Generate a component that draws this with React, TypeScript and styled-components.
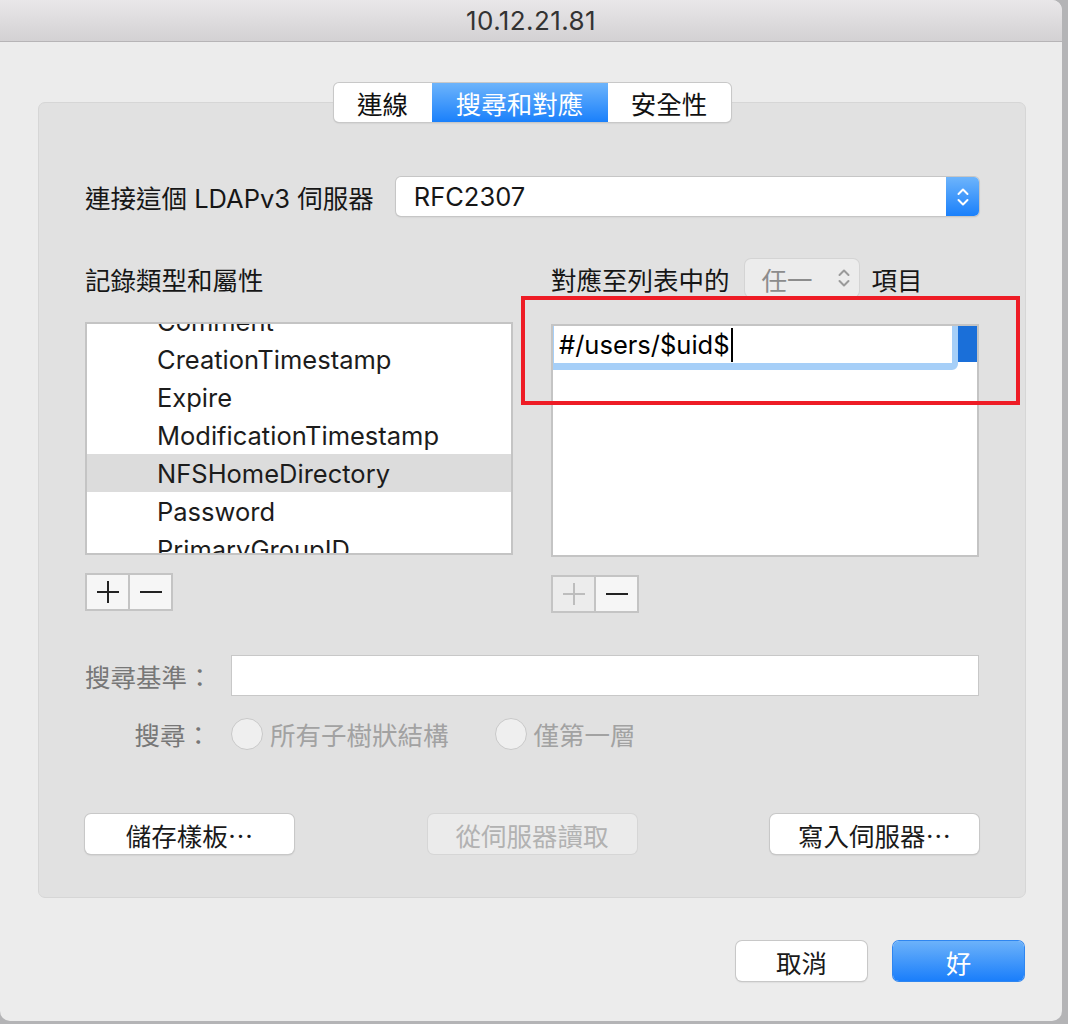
import React from "react";
import styled, { createGlobalStyle, css } from "styled-components";

const FS = "25.5px";

const Global = createGlobalStyle`
  html, body { margin: 0; padding: 0; background: #b4b4b6; }
  body { font-family: "Inter", "Noto Sans CJK TC", sans-serif; }
  * { box-sizing: border-box; }
`;

const Window = styled.div`
  position: relative;
  width: 1062px;
  height: 1021px;
  background: #ececec;
  border-radius: 0 10px 10px 10px;
  overflow: hidden;
  display: flex;
  flex-direction: column;
`;

const TitleBar = styled.div`
  height: 42px;
  flex: none;
  display: flex;
  align-items: center;
  justify-content: center;
  background: linear-gradient(#e9e7e9, #d3d1d3);
  border-bottom: 1px solid #b6b4b6;
  font-size: 26px;
  color: #333;
  letter-spacing: 0.4px;
`;

const Content = styled.div`
  display: flex;
  flex-direction: column;
  padding: 41px 36px 0 38px;
`;

const TabBar = styled.div`
  align-self: center;
  display: flex;
  height: 39px;
  margin-bottom: -20px;
  position: relative;
  z-index: 1;
  background: #fff;
  border-radius: 5px;
  overflow: hidden;
  box-shadow: 0 0 0 1px #c8c8c8, 0 1px 2px rgba(0, 0, 0, 0.18);
`;

const Tab = styled.div<{ $w: number; $active?: boolean }>`
  width: ${(p) => p.$w}px;
  display: flex;
  align-items: center;
  justify-content: center;
  font-size: ${FS};
  color: #111;
  ${(p) =>
    p.$active &&
    css`
      background: linear-gradient(#6db4fb, #1a80fb);
      color: #fff;
    `}
`;

const GroupBox = styled.div`
  height: 796px;
  background: #e1e1e1;
  border: 1px solid #d6d6d6;
  border-radius: 7px;
  padding: 74px 46px 0 46px;
  display: flex;
  flex-direction: column;
`;

const Label = styled.span<{ $muted?: boolean; $faint?: boolean }>`
  font-size: ${FS};
  color: ${(p) => (p.$faint ? "#a2a2a2" : p.$muted ? "#7a7a7a" : "#161616")};
  white-space: nowrap;
`;

const ServerRow = styled.div`
  display: flex;
  align-items: center;
  height: 39px;
  gap: 22px;
`;

const Popup = styled.div`
  flex: 1;
  height: 39px;
  display: flex;
  background: #fff;
  border-radius: 5px;
  box-shadow: 0 0 0 1px #c6c6c6, 0 1px 2px rgba(0, 0, 0, 0.15);
  overflow: hidden;
`;

const PopupText = styled.div`
  flex: 1;
  display: flex;
  align-items: center;
  padding-left: 18px;
  font-size: ${FS};
  color: #161616;
`;

const Stepper = styled.div`
  width: 33px;
  display: flex;
  align-items: center;
  justify-content: center;
  background: linear-gradient(#6db4fb, #1a80fb);
`;

const TwoCol = styled.div<{ $mt: number }>`
  display: grid;
  grid-template-columns: 428px 428px;
  column-gap: 38px;
  margin-top: ${(p) => p.$mt}px;
`;

const HeadCell = styled.div`
  display: flex;
  align-items: center;
  height: 38px;
`;

const SmallPopup = styled.div`
  width: 114px;
  height: 38px;
  margin: 0 13px 0 15px;
  display: flex;
  align-items: center;
  justify-content: space-between;
  padding: 0 8px 0 17px;
  background: #ececec;
  border-radius: 6px;
  box-shadow: 0 0 0 1px #d4d4d4;
  font-size: ${FS};
  color: #8c8c8c;
`;

const Column = styled.div<{ $offset?: number }>`
  display: flex;
  flex-direction: column;
  margin-top: ${(p) => p.$offset ?? 0}px;
`;

const ListBox = styled.div`
  height: 233px;
  background: #fff;
  border: 2px solid #c4c4c4;
  overflow: hidden;
`;

const Scrolled = styled.div`
  margin-top: -22px;
`;

const ListRow = styled.div<{ $selected?: boolean }>`
  height: 38px;
  display: flex;
  align-items: center;
  padding-left: 70px;
  font-size: ${FS};
  color: #1c1c1c;
  background: ${(p) => (p.$selected ? "#dcdcdc" : "transparent")};
`;

const EditRow = styled.div`
  display: flex;
  height: 44px;
  align-items: flex-start;
`;

const EditField = styled.div`
  width: 405px;
  height: 45px;
  margin-top: -1px;
  border-style: solid;
  border-color: #a6cff8;
  border-width: 1px 6px 7px 1px;
  border-radius: 0 0 6px 0;
  background: #fff;
  display: flex;
  align-items: center;
  padding-left: 5px;
  font-size: ${FS};
  color: #000;
  position: relative;
  z-index: 1;
`;

const Caret = styled.span`
  display: inline-block;
  width: 2px;
  height: 34px;
  background: #000;
  margin-left: 1px;
`;

const SelBlock = styled.div`
  flex: 1;
  height: 36px;
  margin-left: -4px;
  background: #1a6fd9;
`;

const PMGroup = styled.div`
  display: flex;
  margin-top: 18px;
  border: 2px solid #c4c4c4;
  width: 88px;
  height: 38px;
`;

const PMButton = styled.div<{ $disabled?: boolean }>`
  flex: 1;
  display: flex;
  align-items: center;
  justify-content: center;
  background: ${(p) => (p.$disabled ? "#ececec" : "#f6f6f6")};
  & + & {
    border-left: 2px solid #c4c4c4;
  }
`;

const FieldRow = styled.div<{ $mt: number }>`
  display: flex;
  align-items: center;
  margin-top: ${(p) => p.$mt}px;
`;

const FieldLabel = styled.div`
  width: 146px;
  flex: none;
  text-align: right;
  padding-right: 20px;
  font-size: ${FS};
  color: #777;
  white-space: nowrap;
`;

const TextField = styled.div`
  flex: 1;
  height: 41px;
  background: #fff;
  border: 1px solid #c8c8c8;
`;

const Radio = styled.span`
  width: 32px;
  height: 32px;
  border-radius: 50%;
  background: #efefef;
  border: 1px solid #c9c9c9;
  flex: none;
  margin-right: 7px;
`;

const RadioItem = styled.div<{ $gap?: number }>`
  display: flex;
  align-items: center;
  height: 36px;
  margin-left: ${(p) => p.$gap ?? 0}px;
`;

const ButtonRow = styled.div<{ $mt: number; $end?: boolean }>`
  display: flex;
  justify-content: ${(p) => (p.$end ? "flex-end" : "space-between")};
  gap: 26px;
  margin-top: ${(p) => p.$mt}px;
  padding-right: ${(p) => (p.$end ? 2 : 0)}px;
`;

const PushButton = styled.div<{
  $w: number;
  $variant?: "default" | "primary" | "disabled";
}>`
  width: ${(p) => p.$w}px;
  height: 40px;
  border-radius: 6px;
  display: flex;
  align-items: center;
  justify-content: center;
  font-size: ${FS};
  ${(p) =>
    p.$variant === "primary"
      ? css`
          background: linear-gradient(#6cb2fa, #1a7efb);
          color: #fff;
          box-shadow: 0 0 0 1px #2f86f0;
        `
      : p.$variant === "disabled"
      ? css`
          background: #ebebeb;
          color: #b2b2b2;
          box-shadow: 0 0 0 1px #d6d6d6;
        `
      : css`
          background: #fff;
          color: #1a1a1a;
          box-shadow: 0 0 0 1px #c8c8c8, 0 1px 2px rgba(0, 0, 0, 0.2);
        `}
`;

const Annotation = styled.div`
  position: absolute;
  left: 521px;
  top: 296px;
  width: 499px;
  height: 109px;
  border: 4px solid #ee1c25;
  pointer-events: none;
  z-index: 5;
`;

const Chevrons = ({ color, w = 14 }: { color: string; w?: number }) => (
  <svg width={w} height={26} viewBox="0 0 14 26" fill="none">
    <path d="M2.5 10 L7 5.5 L11.5 10" stroke={color} strokeWidth="2" strokeLinecap="round" strokeLinejoin="round" />
    <path d="M2.5 16 L7 20.5 L11.5 16" stroke={color} strokeWidth="2" strokeLinecap="round" strokeLinejoin="round" />
  </svg>
);

const PlusIcon = ({ color }: { color: string }) => (
  <svg width="24" height="24" viewBox="0 0 24 24">
    <path d="M1 12 H23 M12 1 V23" stroke={color} strokeWidth="2" />
  </svg>
);

const MinusIcon = ({ color }: { color: string }) => (
  <svg width="24" height="24" viewBox="0 0 24 24">
    <path d="M1 12 H23" stroke={color} strokeWidth="2" />
  </svg>
);

const attributes = [
  "Comment",
  "CreationTimestamp",
  "Expire",
  "ModificationTimestamp",
  "NFSHomeDirectory",
  "Password",
  "PrimaryGroupID",
];

export default function App() {
  return (
    <>
      <Global />
      <Window>
        <TitleBar>10.12.21.81</TitleBar>
        <Content>
          <TabBar>
            <Tab $w={98}>連線</Tab>
            <Tab $w={176} $active>
              搜尋和對應
            </Tab>
            <Tab $w={123}>安全性</Tab>
          </TabBar>
          <GroupBox>
            <ServerRow>
              <Label>連接這個 LDAPv3 伺服器</Label>
              <Popup>
                <PopupText>RFC2307</PopupText>
                <Stepper>
                  <Chevrons color="#fff" />
                </Stepper>
              </Popup>
            </ServerRow>

            <TwoCol $mt={43}>
              <HeadCell>
                <Label>記錄類型和屬性</Label>
              </HeadCell>
              <HeadCell>
                <Label>對應至列表中的</Label>
                <SmallPopup>
                  <span>任一</span>
                  <Chevrons color="#9a9a9a" />
                </SmallPopup>
                <Label>項目</Label>
              </HeadCell>
            </TwoCol>

            <TwoCol $mt={25}>
              <Column>
                <ListBox>
                  <Scrolled>
                    {attributes.map((a) => (
                      <ListRow key={a} $selected={a === "NFSHomeDirectory"}>
                        {a}
                      </ListRow>
                    ))}
                  </Scrolled>
                </ListBox>
                <PMGroup>
                  <PMButton>
                    <PlusIcon color="#222" />
                  </PMButton>
                  <PMButton>
                    <MinusIcon color="#222" />
                  </PMButton>
                </PMGroup>
              </Column>
              <Column $offset={2}>
                <ListBox>
                  <EditRow>
                    <EditField>
                      #/users/$uid$
                      <Caret />
                    </EditField>
                    <SelBlock />
                  </EditRow>
                </ListBox>
                <PMGroup>
                  <PMButton $disabled>
                    <PlusIcon color="#bdbdbd" />
                  </PMButton>
                  <PMButton>
                    <MinusIcon color="#222" />
                  </PMButton>
                </PMGroup>
              </Column>
            </TwoCol>

            <FieldRow $mt={42}>
              <FieldLabel>搜尋基準：</FieldLabel>
              <TextField />
            </FieldRow>

            <FieldRow $mt={19}>
              <FieldLabel>搜尋：</FieldLabel>
              <RadioItem>
                <Radio />
                <Label $faint>所有子樹狀結構</Label>
              </RadioItem>
              <RadioItem $gap={46}>
                <Radio />
                <Label $faint>僅第一層</Label>
              </RadioItem>
            </FieldRow>

            <ButtonRow $mt={62}>
              <PushButton $w={209}>儲存樣板⋯</PushButton>
              <PushButton $w={209} $variant="disabled">
                從伺服器讀取
              </PushButton>
              <PushButton $w={209}>寫入伺服器⋯</PushButton>
            </ButtonRow>
          </GroupBox>

          <ButtonRow $mt={43} $end>
            <PushButton $w={131}>取消</PushButton>
            <PushButton $w={131} $variant="primary">
              好
            </PushButton>
          </ButtonRow>
        </Content>
        <Annotation />
      </Window>
    </>
  );
}
